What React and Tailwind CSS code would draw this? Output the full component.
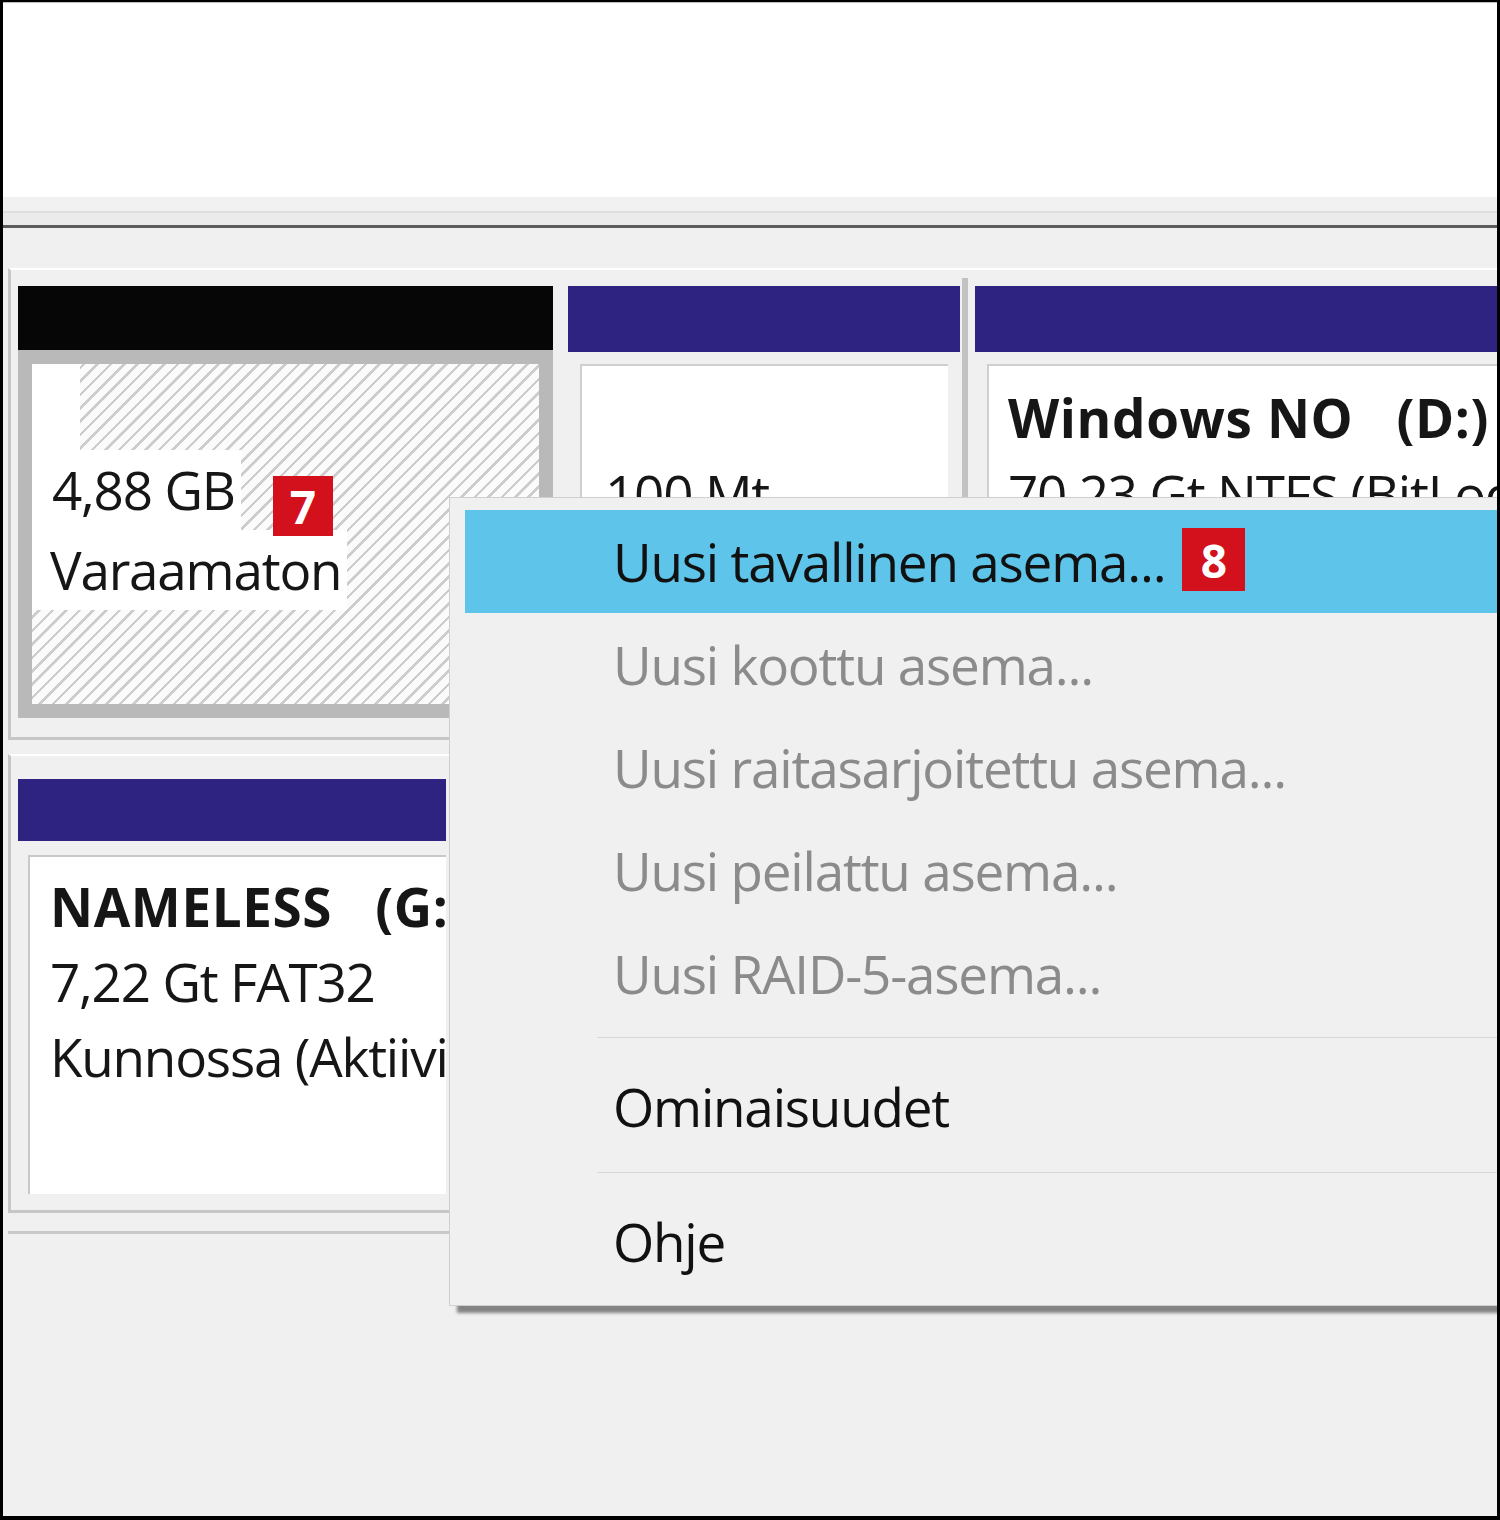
import React from "react";

const menuItems = [
  { label: "Uusi tavallinen asema...", active: true, badge: "8" },
  { label: "Uusi koottu asema...", disabled: true },
  { label: "Uusi raitasarjoitettu asema...", disabled: true },
  { label: "Uusi peilattu asema...", disabled: true },
  { label: "Uusi RAID-5-asema...", disabled: true },
];

function Badge({ children, className = "" }) {
  return (
    <span
      className={`flex items-center justify-center bg-[#d3111c] text-white font-bold text-[46px] leading-none tracking-normal ${className}`}
    >
      {children}
    </span>
  );
}

function Separator({ h }) {
  return (
    <div className={`${h} flex items-center pl-[132px]`}>
      <div className="h-px w-full bg-[#d6d6d6]" />
    </div>
  );
}

function ContextMenu() {
  return (
    <div className="absolute left-[446px] top-[495px] w-[1100px] bg-[#f0f0f0] border border-[#cfcfcf] pl-[15px] pt-[12px] shadow-[8px_7px_3px_rgba(0,0,0,0.45)]">
      {menuItems.map((item) => (
        <div
          key={item.label}
          className={`h-[103px] flex items-center pl-[148px] ${
            item.active ? "bg-[#5ec4ea] text-[#111]" : "text-[#8b8b8b]"
          }`}
        >
          <span>{item.label}</span>
          {item.badge && <Badge className="ml-[17px] w-[63px] h-[63px] -mt-[4px]">{item.badge}</Badge>}
        </div>
      ))}
      <Separator h="h-[24px]" />
      <div className="h-[116px] flex items-center pl-[148px] text-[#111]">Ominaisuudet</div>
      <Separator h="h-[14px]" />
      <div className="h-[126px] flex items-center pl-[148px] text-[#111]">Ohje</div>
    </div>
  );
}

export default function App() {
  return (
    <div className="relative w-[1500px] h-[1520px] overflow-hidden bg-[#f0f0f0] border-black border-l-[3px] border-r-[3px] border-t-[2px] border-b-[4px] font-['Open_Sans',sans-serif] text-[53px] tracking-[-1.2px] text-[#161616]">
      {/* list area */}
      <div className="h-[195px] bg-white border-t border-[#bdbdbd]" />
      <div className="h-[14px] bg-[#f1f1f1]" />
      <div className="h-[2px] bg-[#dedede]" />
      <div className="h-[12px] bg-[#ebebeb]" />
      <div className="h-[3px] bg-[#5c5c5c]" />

      {/* disk 1 */}
      <div className="mt-[40px] ml-[5px] flex border-l-[3px] border-b-[3px] border-[#c6c6c6] border-t-2 border-t-white pl-[7px] pt-[16px] pb-[19px]">
        <div className="w-[535px] shrink-0 flex flex-col">
          <div className="h-[64px] bg-[#060606]" />
          <div className="h-[368px] border-[14px] border-[#b9b9b9] bg-[repeating-linear-gradient(135deg,#fbfbfb_0px,#fbfbfb_7px,#cdcdcd_7px,#cdcdcd_9.5px)]">
            <div className="w-[48px] h-[86px] bg-white" />
            <div className="relative w-fit bg-white pl-[20px] pr-[6px] leading-[80px]">
              4,88 GB
              <Badge className="absolute left-[241px] top-[26px] w-[60px] h-[60px]">7</Badge>
            </div>
            <div className="w-fit bg-white pl-[18px] pr-[6px] leading-[80px]">Varaamaton</div>
          </div>
        </div>

        <div className="w-[15px] shrink-0" />

        <div className="w-[392px] shrink-0 flex flex-col">
          <div className="h-[66px] bg-[#2e2380]" />
          <div className="flex-1 px-[12px] pt-[12px]">
            <div className="h-full bg-white border-t-2 border-l-2 border-[#cfcfcf] pl-[23px] pt-[14px] leading-[76px]">
              <div className="h-[76px]" />
              <div>100 Mt</div>
            </div>
          </div>
        </div>

        <div className="w-[15px] shrink-0 flex">
          <div className="ml-[2px] -mt-[8px] w-[6px] bg-[#c2c2c2]" />
        </div>

        <div className="flex-1 min-w-0 overflow-hidden flex flex-col">
          <div className="h-[66px] bg-[#2e2380]" />
          <div className="flex-1 pl-[12px] pt-[12px]">
            <div className="h-full bg-white border-t-2 border-l-2 border-[#cfcfcf] pl-[19px] pt-[14px] leading-[76px] whitespace-nowrap">
              <div className="font-bold tracking-[0.6px]">Windows NO&nbsp;&nbsp;&nbsp;(D:)</div>
              <div>70,23 Gt NTFS (BitLocker)</div>
            </div>
          </div>
        </div>
      </div>

      {/* disk 2 */}
      <div className="mt-[14px] ml-[5px] flex border-l-[3px] border-b-[3px] border-[#c6c6c6] border-t-2 border-t-white pl-[7px] pt-[23px] pb-[16px]">
        <div className="w-[428px] shrink-0 overflow-hidden flex flex-col">
          <div className="h-[62px] bg-[#2e2380]" />
          <div className="pl-[10px] pt-[14px]">
            <div className="h-[339px] bg-white border-t-2 border-l-2 border-[#c9c9c9] pl-[20px] pt-[12px] leading-[75px] whitespace-nowrap">
              <div className="font-bold tracking-[0.6px]">NAMELESS&nbsp;&nbsp;&nbsp;(G:)</div>
              <div>7,22 Gt FAT32</div>
              <div>Kunnossa (Aktiivinen)</div>
            </div>
          </div>
        </div>
      </div>
      <div className="mt-[18px] ml-[5px] h-[3px] bg-[#c8c8c8]" />

      <ContextMenu />
    </div>
  );
}
